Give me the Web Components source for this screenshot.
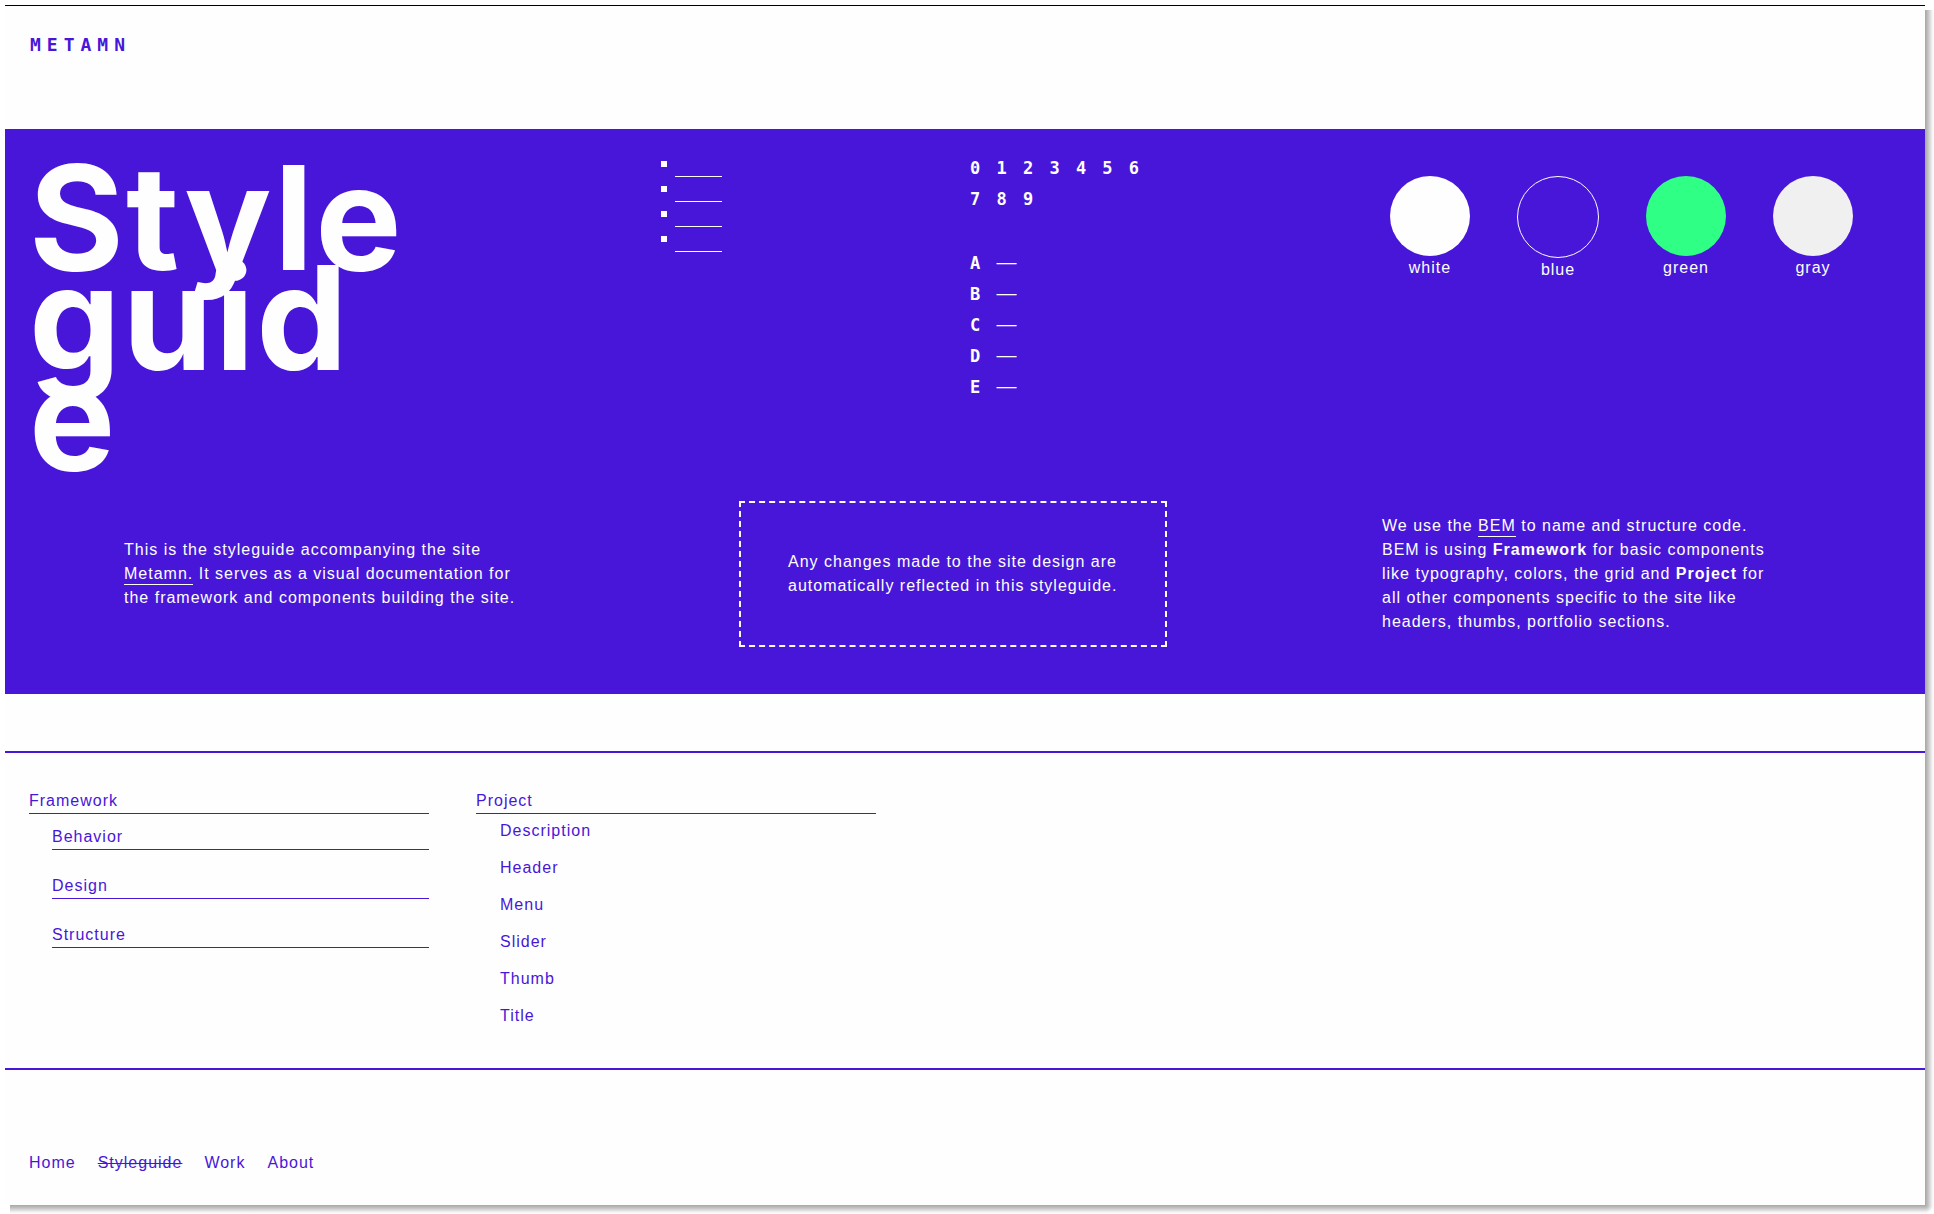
<!DOCTYPE html>
<html lang="en">
<head>
<meta charset="utf-8">
<title>Metamn Styleguide</title>
<style>
  :root { --blue: #4816d8; --white: #fefefe; --green: #30ff85; --gray: #f0f0f0; }
  html { background: #fff; }
  body {
    margin: 5px 0 0 5px;
    font: 16px/24px "Liberation Sans", Arial, sans-serif;
    letter-spacing: 1px;
    color: var(--blue);
  }
</style>
</head>
<body>
<style-page></style-page>

<script>
const define = (name, html) => {
  const template = document.createElement('template');
  template.innerHTML = html;
  customElements.define(name, class extends HTMLElement {
    constructor() {
      super();
      this.attachShadow({ mode: 'open' }).append(template.content.cloneNode(true));
    }
  });
};

define('site-logo', `
<style>
  :host { display: block; padding: 24px 25px; height: 75px; }
  a { font: bold 18px/30px "DejaVu Sans Mono", monospace; letter-spacing: 6px; color: inherit; text-decoration: none; }
</style>
<a href="#home"><slot></slot></a>`);

define('bullet-sample', `
<style>
  :host { display: block; }
  ul { list-style: none; margin: 0; padding: 0 0 0 8px; display: grid; gap: 1px; }
  li { display: flex; gap: 8px; height: 24px; }
  li::before { content: ""; width: 6px; height: 6px; margin-top: 8px; background: currentColor; }
  span { width: 47px; border-bottom: 1px solid; }
</style>
<ul><li><span></span></li><li><span></span></li><li><span></span></li><li><span></span></li></ul>`);

define('glyph-sample', `
<style>
  :host { display: block; font: bold 17px/31px "DejaVu Sans Mono", monospace; letter-spacing: 3px; }
  p { margin: 0 0 33px; max-width: 188px; }
  ul { list-style: none; margin: 0; padding: 0; }
  li { height: 31px; }
  span { font: 20px/24px "Liberation Sans", sans-serif; }
</style>
<p>0 1 2 3 4 5 6 7 8 9</p>
<ul>
  <li>A <span>—</span></li><li>B <span>—</span></li><li>C <span>—</span></li>
  <li>D <span>—</span></li><li>E <span>—</span></li>
</ul>`);

define('color-swatch', `
<style>
  :host { display: block; text-align: center; }
  div { width: 80px; height: 80px; border-radius: 50%; background: var(--fill); }
  :host([outlined]) div { border: 1px solid; }
</style>
<div></div><slot></slot>`);

define('color-palette', `
<style>
  :host { display: flex; align-items: flex-start; gap: 47px; padding-top: 23px; }
</style>
<color-swatch style="--fill: var(--white)">white</color-swatch>
<color-swatch style="--fill: var(--blue)" outlined>blue</color-swatch>
<color-swatch style="--fill: var(--green)">green</color-swatch>
<color-swatch style="--fill: var(--gray)">gray</color-swatch>`);

define('intro-text', `
<style>
  :host { display: block; box-sizing: border-box; width: 400px; }
  :host([boxed]) { width: 428px; padding: 47px; border: 2px dashed; }
  p { margin: 0; }
  ::slotted(a) { color: inherit; text-decoration: none; border-bottom: 1px solid; padding-bottom: 2px; }
</style>
<p><slot></slot></p>`);

define('style-hero', `
<style>
  :host { display: block; background: var(--blue); color: var(--white); padding: 24px 0 47px; }
  .top { display: grid; grid-template-columns: 624fr 317fr 420fr 511fr; padding: 0 24px; }
  h1 { margin: 15px 0 0; width: 400px; font: bold 145px/100px Inter, "Liberation Sans", sans-serif; letter-spacing: 2px; word-break: break-all; }
  .bottom { display: flex; justify-content: space-between; align-items: center; padding: 33px 143px 0 119px; }
</style>
<div class="top">
  <h1>Styleguide</h1>
  <bullet-sample></bullet-sample>
  <glyph-sample></glyph-sample>
  <color-palette></color-palette>
</div>
<div class="bottom">
  <intro-text>This is the styleguide accompanying the site <a href="#metamn">Metamn.</a> It serves as a visual documentation for the framework and components building the site.</intro-text>
  <intro-text boxed>Any changes made to the site design are automatically reflected in this styleguide.</intro-text>
  <intro-text>We use the <a href="#bem">BEM</a> to name and structure code. BEM is using <b>Framework</b> for basic components like typography, colors, the grid and <b>Project</b> for all other components specific to the site like headers, thumbs, portfolio sections.</intro-text>
</div>`);

define('nav-group', `
<style>
  :host { display: block; width: 400px; }
  .title { border-bottom: 1px solid; }
  .items { display: grid; gap: 13px; padding: 5px 0 0 24px; }
  :host([ruled]) .items { gap: 24px; padding: 11px 0 0 23px; }
  ::slotted(a) { color: inherit; text-decoration: none; }
  :host([ruled]) .items ::slotted(a) { border-bottom: 1px solid; }
</style>
<div class="title"><slot name="title"></slot></div>
<div class="items"><slot></slot></div>`);

define('style-index', `
<style>
  :host { display: flex; gap: 47px; margin-top: 57px; padding: 36px 24px 40px; border: solid var(--blue); border-width: 2px 0; }
</style>
<nav-group ruled>
  <a slot="title" href="#framework">Framework</a>
  <a href="#behavior">Behavior</a><a href="#design">Design</a><a href="#structure">Structure</a>
</nav-group>
<nav-group>
  <a slot="title" href="#project">Project</a>
  <a href="#description">Description</a><a href="#header">Header</a><a href="#menu">Menu</a>
  <a href="#slider">Slider</a><a href="#thumb">Thumb</a><a href="#title">Title</a>
</nav-group>`);

define('site-menu', `
<style>
  :host { display: block; padding: 81px 24px 30px; }
  nav { display: flex; gap: 22px; }
  a { color: inherit; text-decoration: none; }
  a[aria-current] { text-decoration: line-through; }
</style>
<nav>
  <a href="#home">Home</a><a href="#styleguide" aria-current="page">Styleguide</a><a href="#work">Work</a><a href="#about">About</a>
</nav>`);

define('style-page', `
<style>
  /* Soft drop shadow along the right and bottom edges of the sheet */
  :host { display: grid; grid-template: 1fr 9px / 1fr 9px; }
  main { background: var(--white); border-top: 1px solid #000; }
  .right { margin-top: 5px; background: linear-gradient(to right, #a6a6a6, #c4c4c4 35%, #f4f4f4 80%, #fff); }
  .bottom { margin-left: 5px; background: linear-gradient(to bottom, #a6a6a6, #c4c4c4 35%, #f4f4f4 80%, #fff); }
  .corner { background: radial-gradient(circle 9px at 0 0, #a6a6a6, #c4c4c4 35%, #f4f4f4 80%, #fff); }
</style>
<main>
  <site-logo>METAMN</site-logo>
  <style-hero></style-hero>
  <style-index></style-index>
  <site-menu></site-menu>
</main>
<div class="right"></div>
<div class="bottom"></div>
<div class="corner"></div>`);
</script>
</body>
</html>
